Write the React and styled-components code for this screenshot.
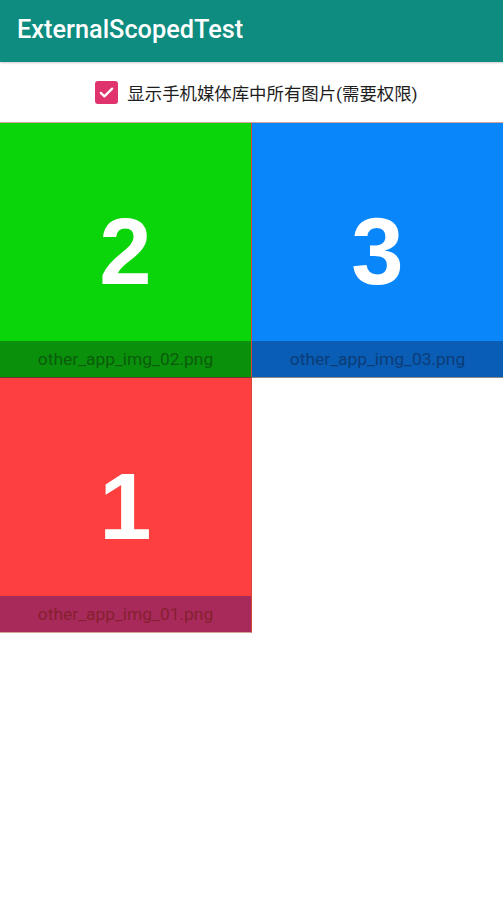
import React from "react";
import styled, { createGlobalStyle } from "styled-components";

const Global = createGlobalStyle`
  html, body { margin: 0; padding: 0; background: #fff; }
  body { font-family: Roboto, "Noto Sans", "Noto Sans CJK SC", sans-serif; }
`;

const Page = styled.div`
  width: 503px;
  min-height: 918px;
  background: #fff;
`;

const AppBar = styled.header`
  height: 62px;
  background: #0e8c7f;
  display: flex;
  align-items: center;
  padding: 0 17px;
  box-sizing: border-box;
  box-shadow: 0 1px 2px rgba(0, 0, 0, 0.2);
  position: relative;
`;

const Title = styled.h1`
  margin: 0;
  color: #fff;
  font-family: Roboto, sans-serif;
  font-weight: 500;
  font-size: 25.3px;
  margin-top: -4px;
`;

const CheckRow = styled.label`
  height: 60px;
  display: flex;
  align-items: center;
  justify-content: center;
  gap: 9px;
  padding-left: 10px;
`;

const Box = styled.span`
  width: 23px;
  height: 23px;
  border-radius: 3px;
  background: #e0336e;
  display: flex;
  align-items: center;
  justify-content: center;
  margin-top: 1px;
`;

const CheckText = styled.span`
  font-family: Roboto, "Noto Sans CJK SC", sans-serif;
  font-size: 17.4px;
  color: #1e1e1e;
`;

const Grid = styled.div`
  display: grid;
  grid-template-columns: 252px 251px;
  border-top: 1px solid #d8a49a;
`;

const Cell = styled.div`
  height: 254px;
  position: relative;
  background: ${(p) => p.$bg};
  border-right: ${(p) => (p.$left ? "1px solid #d8453a" : "none")};
  border-bottom: 1px solid ${(p) => p.$line};
  display: flex;
  align-items: center;
  justify-content: center;
  overflow: hidden;
`;

const Digit = styled.span`
  font-family: "Liberation Sans", Arial, sans-serif;
  font-weight: 700;
  font-size: 94px;
  color: #fff;
  line-height: 1;
  margin-top: 4px;
`;

const Caption = styled.div`
  position: absolute;
  left: 0;
  right: 0;
  bottom: 0;
  height: 36px;
  background: ${(p) => p.$bg};
  color: ${(p) => p.$fg};
  font-family: Roboto, sans-serif;
  font-size: 17.4px;
  display: flex;
  align-items: center;
  justify-content: center;
`;

const items = [
  { n: "2", bg: "#0ad50a", cap: "#0a900b", fg: "#0b5c0b", name: "other_app_img_02.png", line: "#6a3c2c", left: true },
  { n: "3", bg: "#0a86fb", cap: "#0a5db4", fg: "#0b3c78", name: "other_app_img_03.png", line: "#8a8a8a", left: false },
  { n: "1", bg: "#fe3f3f", cap: "#a82a5b", fg: "#86202f", name: "other_app_img_01.png", line: "#d8a49a", left: true },
];

export default function App() {
  return (
    <Page>
      <Global />
      <AppBar>
        <Title>ExternalScopedTest</Title>
      </AppBar>
      <CheckRow>
        <Box>
          <svg width="17" height="17" viewBox="0 0 24 24" fill="none">
            <path d="M4 12.5l5 5L20 6.5" stroke="#fff" strokeWidth="3.2" strokeLinecap="round" strokeLinejoin="round" />
          </svg>
        </Box>
        <CheckText>显示手机媒体库中所有图片(需要权限)</CheckText>
      </CheckRow>
      <Grid>
        {items.map((it) => (
          <Cell key={it.n} $bg={it.bg} $left={it.left} $line={it.line}>
            <Digit>{it.n}</Digit>
            <Caption $bg={it.cap} $fg={it.fg}>{it.name}</Caption>
          </Cell>
        ))}
      </Grid>
    </Page>
  );
}
